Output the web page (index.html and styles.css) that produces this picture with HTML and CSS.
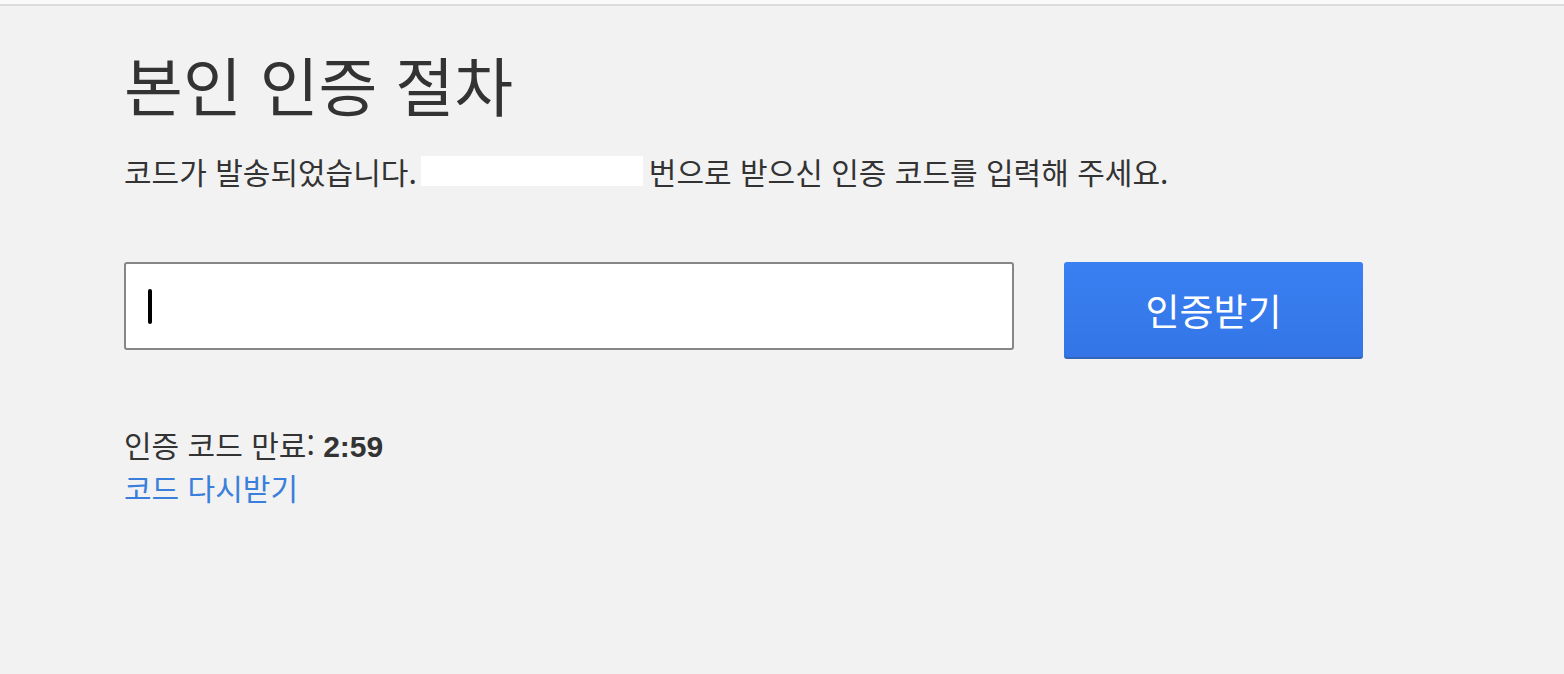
FILE: index.html
```html
<!DOCTYPE html>
<html lang="ko">
<head>
<meta charset="utf-8">
<link rel="stylesheet" href="styles.css">
</head>
<body>
<div class="topbar"></div>
<main class="page">
  <h1 class="title">본인 인증 절차</h1>
  <p class="desc">코드가 발송되었습니다.<span class="masked"></span>번으로 받으신 인증 코드를 입력해 주세요.</p>
  <div class="form-row">
    <div class="code-input"><span class="caret"></span></div>
    <button class="submit">인증받기</button>
  </div>
  <div class="timer">인증 코드 만료: <b>2:59</b></div>
  <a class="resend">코드 다시받기</a>
</main>
</body>
</html>
```
FILE: styles.css
```css
html, body {
  margin: 0;
  padding: 0;
}
body {
  background: #f2f2f2;
  font-family: "Noto Sans CJK KR", "Liberation Sans", sans-serif;
  color: #333;
  height: 674px;
  overflow: hidden;
}
.topbar {
  height: 4px;
  background: #fafafa;
  border-bottom: 2px solid #dcdcdc;
}
.page {
  padding: 0 124px;
}
.title {
  margin: 0;
  padding-top: 37px;
  font-size: 64px;
  font-weight: 400;
  line-height: 80px;
  color: #333;
}
.desc {
  margin: 28px 0 0;
  font-size: 30px;
  line-height: 40px;
  color: #333;
  display: flex;
  align-items: center;
}
.masked {
  display: inline-block;
  width: 222px;
  height: 30px;
  background: #fff;
  margin: 0 6px 0 4px;
}
.form-row {
  display: flex;
  align-items: flex-start;
  margin-top: 71px;
  gap: 50px;
}
.code-input {
  box-sizing: border-box;
  width: 890px;
  height: 88px;
  background: #fff;
  border: 2px solid #868686;
  border-radius: 3px;
  display: flex;
  align-items: center;
  padding-left: 22px;
}
.caret {
  display: block;
  width: 4px;
  height: 35px;
  background: #000;
  border-radius: 2px;
}
.submit {
  box-sizing: border-box;
  width: 299px;
  height: 97px;
  border: none;
  border-bottom: 2px solid #3366b8;
  border-radius: 3px;
  background: linear-gradient(#3a80f2, #3375e7);
  color: #fff;
  font-family: inherit;
  font-size: 37px;
  padding: 0;
}
.timer {
  margin-top: 65px;
  font-size: 30px;
  line-height: 40px;
  color: #333;
}
.timer b {
  font-family: "Liberation Sans", sans-serif;
  font-weight: 700;
}
.resend {
  display: block;
  font-size: 30px;
  line-height: 40px;
  color: #3b7fdc;
}
```
